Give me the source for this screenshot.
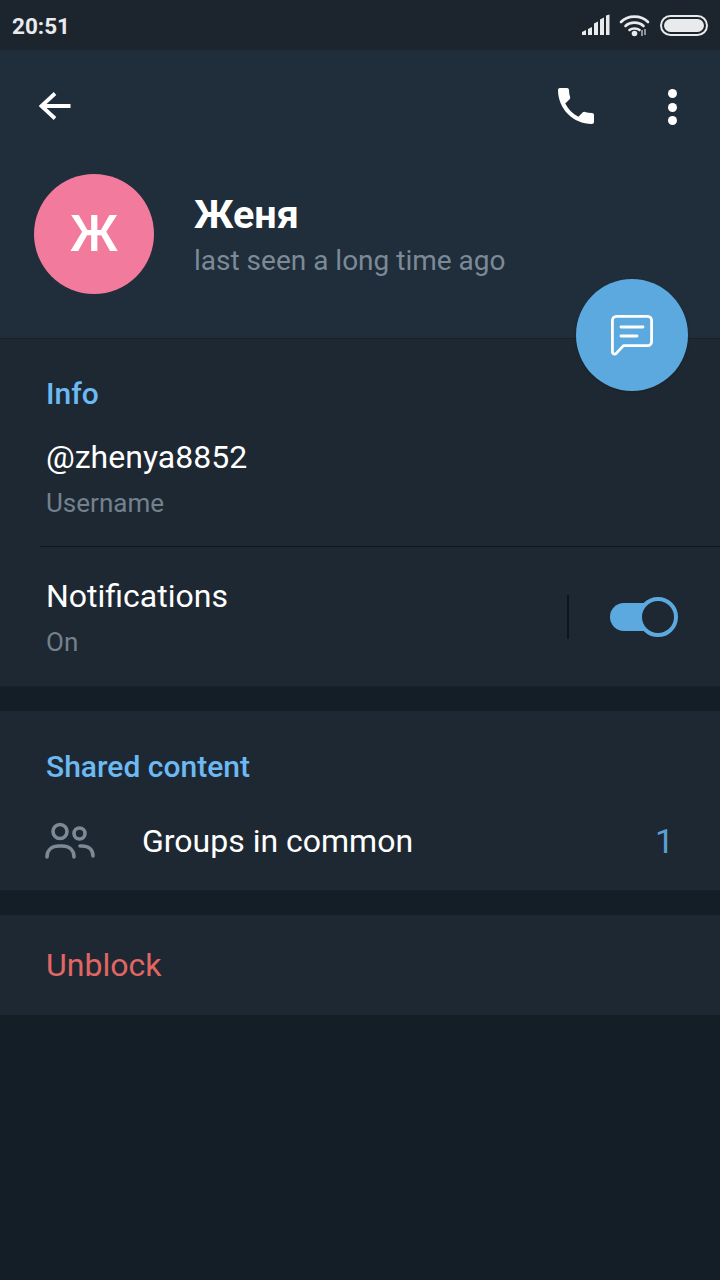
<div class="page">
  <div class="status">
    <span class="time">20:51</span>
    <div class="status-icons">
      <svg class="signal" width="28" height="22" viewBox="0 0 28 22"><g fill="#e8eaec">
        <path d="M0 21v-3l4-2v5z"/><path d="M6 21v-6l4-2v8z" /><path d="M12 21V9.500l4-2V21z"/><path d="M18 21V5.500l4-2V21z"/><path d="M24 21V1.500l3.500-1V21z"/>
      </g></svg>
      <svg class="wifi" width="32" height="24" viewBox="0 0 32 24">
        <g fill="none" stroke="#e8eaec" stroke-width="2.600" stroke-linecap="round">
          <path d="M2 9C9 1.800 22 1.800 29 9"/><path d="M6.500 13C11 8.500 20 8.500 24.500 13"/><path d="M10.500 17C13 15 18 15 20.500 17"/>
        </g>
        <circle cx="15.500" cy="20.500" r="2.800" fill="#e8eaec"/>
        <path d="M23 23v-6M26 16v6" stroke="#a9aeb3" stroke-width="1.600"/>
      </svg>
      <div class="battery"><div class="battery-fill"></div></div>
    </div>
  </div>

  <header class="header">
    <div class="toolbar">
      <svg class="back" width="36" height="32" viewBox="0 0 36 32"><path d="M3.500 16h30M18 3.500 4.500 16 18 28.500" fill="none" stroke="#fff" stroke-width="3.800"/></svg>
      <div class="spacer"></div>
      <svg class="phone" width="48" height="48" viewBox="0 0 24 24"><path fill="#fff" d="M6.620 10.790c1.440 2.830 3.760 5.140 6.590 6.590l2.200-2.200c.27-.27.670-.36 1.020-.24 1.120.37 2.330.57 3.570.57.550 0 1 .45 1 1V20c0 .55-.45 1-1 1C10.610 21 3 13.390 3 4c0-.55.450-1 1-1h3.500c.55 0 1 .45 1 1 0 1.250.200 2.450.570 3.570.110.350.030.740-.250 1.020z"/></svg>
      <div class="dots"><i></i><i></i><i></i></div>
    </div>
    <div class="profile">
      <div class="avatar">Ж</div>
      <div class="who">
        <div class="name">Женя</div>
        <div class="seen">last seen a long time ago</div>
      </div>
    </div>
    <button class="fab" aria-label="Message">
      <svg width="46" height="46" viewBox="0 0 46 46"><path d="M7.400 4.400h31.200a4 4 0 0 1 4 4v21.200a4 4 0 0 1-4 4H14.500l-7.500 8c-1.200 1-3.600.3-3.600-1.400V8.400a4 4 0 0 1 4-4z" fill="none" stroke="#fff" stroke-width="2.800" stroke-linejoin="round"/><path d="M12 15h22M12 24h16" stroke="#fff" stroke-width="2.800" stroke-linecap="round"/></svg>
    </button>
  </header>

  <section class="card info">
    <h2>Info</h2>
    <div class="row user">
      <div class="primary">@zhenya8852</div>
      <div class="secondary">Username</div>
    </div>
    <div class="row notif">
      <div class="grow">
        <div class="primary">Notifications</div>
        <div class="secondary">On</div>
      </div>
      <div class="vline"></div>
      <div class="toggle"><div class="knob"></div></div>
    </div>
  </section>

  <section class="card shared">
    <h2>Shared content</h2>
    <div class="groups">
      <svg width="52" height="38" viewBox="0 0 52 38" fill="none" stroke="#7c8a97" stroke-width="3.600" stroke-linecap="round">
        <circle cx="16" cy="9.500" r="7"/><circle cx="35.500" cy="11.500" r="5.500"/>
        <path d="M3 35c0-7 5-11 12-11h3c7 0 12 4 12 11"/><path d="M36 24h2c6 0 11 3 11 10"/>
      </svg>
      <span class="label">Groups in common</span>
      <span class="count">1</span>
    </div>
  </section>

  <section class="card unblock">Unblock</section>
</div>

<style>
  :global(body) { margin: 0; background: #141e26; }
  .page { position: relative; min-height: 1280px; background: #141e26; font-family: Roboto, "Noto Sans", sans-serif; color: #fff; }
  .status { height: 50px; background: #1c252e; display: flex; align-items: center; justify-content: space-between; padding: 0 12px; box-sizing: border-box; }
  .time { font-size: 22.5px; font-weight: 700; color: #e8eaec; position: relative; top: 1px; }
  .status-icons { display: flex; align-items: center; }
  .signal { margin-right: 9px; }
  .wifi { margin-right: 9px; }
  .battery { width: 48px; height: 21px; border: 2.500px solid #e8eaec; border-radius: 11px; box-sizing: border-box; padding: 2px; }
  .battery-fill { height: 100%; background: #e8eaec; border-radius: 7px; }

  .header { position: relative; height: 288px; background: #202d3a; border-bottom: 1px solid #18212a; }
  .toolbar { display: flex; align-items: center; height: 112px; padding: 0 43px 0 37px; }
  .spacer { flex: 1; }
  .phone { margin-right: 68px; }
  .dots { display: flex; flex-direction: column; gap: 4.500px; position: relative; top: 1px; }
  .dots i { width: 9px; height: 9px; border-radius: 50%; background: #fff; display: block; }
  .profile { display: flex; align-items: center; padding: 12px 0 0 34px; }
  .avatar { width: 120px; height: 120px; border-radius: 50%; background: #f27a9c; display: flex; align-items: center; justify-content: center; font-size: 50px; font-weight: 500; }
  .who { margin-left: 40px; padding-top: 3px; }
  .name { font-size: 39.500px; font-weight: 700; line-height: 44px; }
  .seen { font-size: 28px; color: #7c8a97; line-height: 34px; margin-top: 7px; }
  .fab { position: absolute; left: 576px; top: 229px; width: 112px; height: 112px; border-radius: 50%; background: #5ca9e0; border: 0; padding: 0; display: flex; align-items: center; justify-content: center; box-shadow: 0 1px 3px rgba(0,0,0,.15); }

  .card { background: #1e2832; }
  h2 { margin: 0; font-size: 30px; font-weight: 500; color: #6cb9f3; line-height: 32px; }
  .info { height: 348px; border-bottom: 1px solid #18212a; box-sizing: border-box; padding: 39px 0 0 46px; }
  .primary { font-size: 32px; line-height: 38px; }
  .secondary { font-size: 26px; line-height: 30px; color: #73818e; margin-top: 12px; }
  .user { padding-top: 28px; height: 136px; box-sizing: border-box; }
  .notif { display: flex; align-items: flex-start; margin-left: -6px; padding: 30px 42px 0 6px; height: 140px; box-sizing: border-box; border-top: 1px solid #10161c; }
  .grow { flex: 1; }
  .vline { width: 2px; height: 44px; background: #0f151c; margin: 18px 41px 0 0; }
  .toggle { position: relative; width: 60px; height: 28px; background: #5ca9e0; border-radius: 14px; margin-top: 26px; margin-right: 8px; }
  .knob { position: absolute; right: -8px; top: -6px; width: 40px; height: 40px; box-sizing: border-box; border: 4px solid #5ca9e0; border-radius: 50%; background: #1e2832; }

  .shared { margin-top: 24px; height: 180px; border-bottom: 1px solid #18212a; box-sizing: border-box; padding: 40px 0 0 46px; }
  .groups { display: flex; align-items: center; margin-top: 38px; padding-right: 46px; }
  .groups svg { margin-left: -2px; }
  .label { font-size: 32px; margin-left: 46px; flex: 1; }
  .count { font-size: 34px; color: #5a9fd6; }

  .unblock { margin-top: 24px; height: 100px; box-sizing: border-box; padding-left: 46px; display: flex; align-items: center; font-size: 32px; color: #e26664; }
</style>
